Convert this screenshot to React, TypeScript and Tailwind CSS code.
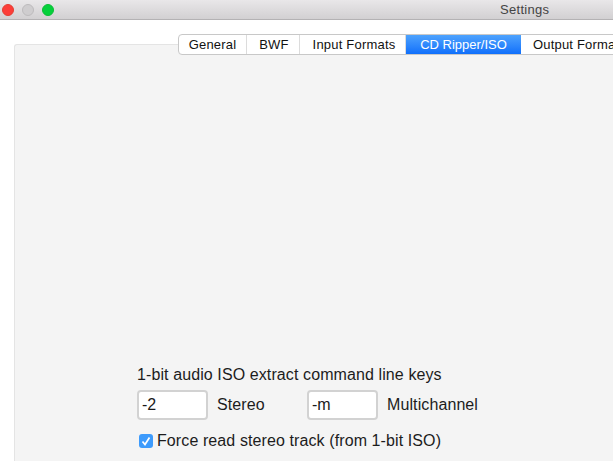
const TABS = [
  { label: 'General', width: 'w-[68px]', active: false },
  { label: 'BWF', width: 'w-[53px] pl-[2px]', active: false },
  { label: 'Input Formats', width: 'w-[106px] pl-[3px]', active: false },
  { label: 'CD Ripper/ISO', width: 'w-[115px]', active: true },
  { label: 'Output Formats', width: 'w-[118px]', active: false },
];

function KeyField({ value, label, labelWidth }: { value: string; label: string; labelWidth: string }) {
  return (
    <div className="flex items-center">
      <input
        readOnly
        value={value}
        className="w-[71px] h-[30px] px-[3px] bg-white border-2 border-[#d2d2d2] rounded-[4px] text-[16px] text-[#1a1a1a] outline-none"
      />
      <span className={`ml-[9px] text-[16px] tracking-[0.1px] text-[#1c1c1c] ${labelWidth}`}>{label}</span>
    </div>
  );
}

export default function App() {
  return (
    <div className="w-[613px] h-[461px] overflow-hidden bg-white font-['Liberation_Sans',Arial,sans-serif]">
      {/* title bar */}
      <div className="relative h-[20px] flex items-center bg-gradient-to-b from-[#e9e7e9] to-[#d2d0d2] border-b border-[#b4b2b4]">
        <div className="flex items-center gap-[8px] pl-[2px]">
          <span className="w-[12px] h-[12px] rounded-full bg-[#fc3d39] border border-[#e33e32]" />
          <span className="w-[12px] h-[12px] rounded-full bg-[#cfcdcf] border border-[#bdbbbd]" />
          <span className="w-[12px] h-[12px] rounded-full bg-[#05d03b] border border-[#0cbc36]" />
        </div>
        <span className="ml-[446px] text-[13px] tracking-[0.3px] text-[#444] whitespace-nowrap">Settings</span>
      </div>

      <div className="pl-[14px] pt-[24px]">
        {/* panel */}
        <div className="h-[420px] bg-[#f4f4f4] border-l border-t border-[#e4e4e4] rounded-tl-[3px]">
          <div className="flex ml-[163px] -mt-[11px] h-[21px] w-[460px] bg-white border border-[#c8c8c8] rounded-l-[4px] overflow-hidden">
            {TABS.map((t) => (
              <div
                key={t.label}
                className={`${t.width} shrink-0 flex items-center justify-center text-[13px] whitespace-nowrap ${
                  t.active
                    ? 'bg-gradient-to-b from-[#4da2fd] to-[#0f6ffb] text-white'
                    : 'border-r border-[#dcdcdc] text-[#111] tracking-[0.2px]'
                }`}
              >
                {t.label}
              </div>
            ))}
          </div>

          <div className="mt-[310px] ml-[122px]">
            <p className="text-[16px] leading-[20px] tracking-[0.1px] text-[#1c1c1c]">1-bit audio ISO extract command line keys</p>
            <div className="flex mt-[5px]">
              <KeyField value="-2" label="Stereo" labelWidth="w-[90px]" />
              <KeyField value="-m" label="Multichannel" labelWidth="w-[100px]" />
            </div>
            <label className="flex items-center mt-[9px] ml-[2px]">
              <span className="w-[14px] h-[14px] rounded-[3px] bg-[#3d9bfc] flex items-center justify-center">
                <svg viewBox="0 0 14 14" className="w-[14px] h-[14px]">
                  <path d="M3.5 7.5 L6 10.5 L10.5 3.5" fill="none" stroke="#fff" strokeWidth="1.7" />
                </svg>
              </span>
              <span className="ml-[4px] text-[16px] tracking-[0.1px] text-[#1c1c1c]">Force read stereo track (from 1-bit ISO)</span>
            </label>
          </div>
        </div>
      </div>
    </div>
  );
}
